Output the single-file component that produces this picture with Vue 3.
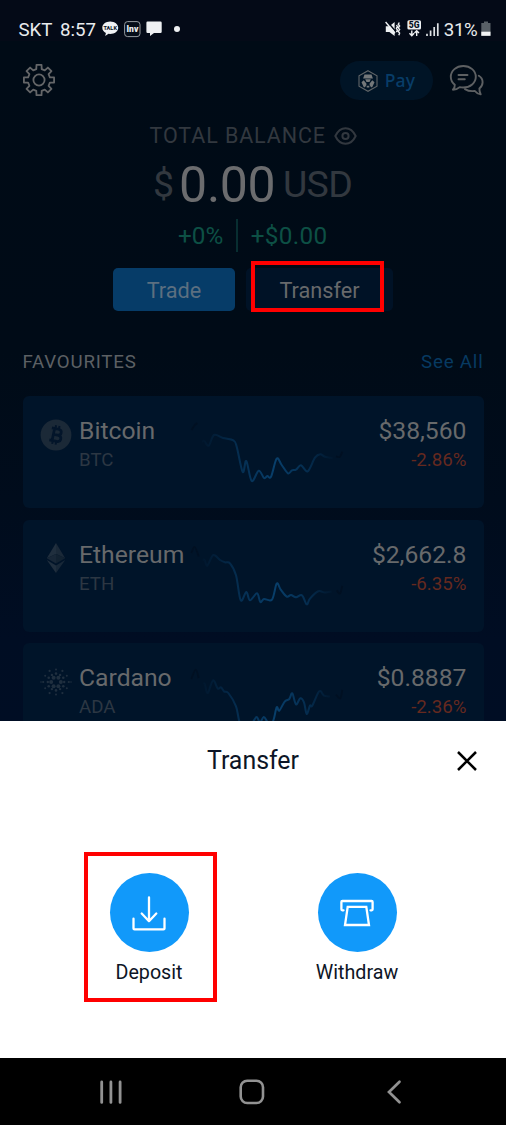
<script setup>
const smooth = (pts) => {
  let d = `M${pts[0][0]} ${pts[0][1]}`
  for (let i = 0; i < pts.length - 1; i++) {
    const a = pts[i - 1] || pts[i]
    const b = pts[i]
    const c = pts[i + 1]
    const e = pts[i + 2] || c
    d += `C${b[0] + (c[0] - a[0]) / 6} ${b[1] + (c[1] - a[1]) / 6} ${c[0] - (e[0] - b[0]) / 6} ${c[1] - (e[1] - b[1]) / 6} ${c[0]} ${c[1]}`
  }
  return d
}

// Sparkline points are relative to the top-left corner of each chart area.
const coins = [
  {
    id: 'btc', name: 'Bitcoin', code: 'BTC', price: '$38,560', change: '-2.86%',
    lead: [[1.7, 34], [4, 30], [7.3, 27]],
    tail: [[146, 60.3], [149.7, 61], [152.3, 55.7]],
    line: [[12, 45.7], [14.3, 45], [18.7, 49.7], [24, 39], [33, 42], [43.3, 44.3], [46.7, 50.7], [52.7, 76], [56.3, 65], [61.7, 85], [68.7, 74.7], [74, 82], [77.3, 80], [81, 80.7], [86.7, 62.7], [91.7, 69], [98, 77.3], [102, 74.3], [106, 73.7], [111, 69.3], [117.7, 75.3], [125, 61.7], [130.3, 58.3], [135, 60.7], [143, 62.3]]
  },
  {
    id: 'eth', name: 'Ethereum', code: 'ETH', price: '$2,662.8', change: '-6.35%',
    lead: [[1.3, 33], [4.7, 27], [8.7, 36.3]],
    tail: [[146.7, 70.3], [150, 73.6], [152.3, 66]],
    line: [[12.7, 39.6], [14.7, 40.3], [17.3, 45.6], [23.3, 35], [30, 40], [35, 42.3], [40, 43.3], [46, 55.3], [50.7, 80.3], [56.3, 72], [60, 80.3], [67, 73.3], [70.3, 82], [74, 79], [82, 79.6], [86.7, 63.6], [90.7, 69.6], [96.7, 76.6], [101, 75], [106, 77.3], [112, 75.3], [116.7, 84.3], [120, 78.6], [128.3, 71.3], [135, 72.6], [141.7, 71.6]]
  },
  {
    id: 'ada', name: 'Cardano', code: 'ADA', price: '$0.8887', change: '-2.36%',
    lead: [[1.3, 36], [5.7, 26.6], [8.7, 35]],
    tail: [[146, 51.6], [150.3, 55.3], [152.3, 47]],
    line: [[13.3, 40], [14.7, 41], [17.7, 50], [23, 37.3], [27.7, 45.6], [31, 44.3], [34.3, 48.6], [38.3, 50], [46, 63.3], [49.3, 78.3], [55, 92], [63, 79], [66.7, 74], [70, 79.3], [73.7, 74], [77, 78.3], [80, 82], [83.5, 77], [86.7, 64.3], [89.3, 67.6], [94.7, 58.6], [99.3, 56], [102.3, 50.3], [106, 61.3], [110.3, 55.3], [114, 59.3], [116.7, 71], [120, 62.6], [122.3, 62.6], [129.3, 48.3], [134, 52.6], [140, 53.6]]
  }
]

const ring = (n, r, size, offset = 0) =>
  Array.from({ length: n }, (_, i) => {
    const t = ((i + offset) * 2 * Math.PI) / n
    return { x: 16 + r * Math.cos(t), y: 16 + r * Math.sin(t), r: size }
  })
const adaDots = [
  ...ring(6, 4.8, 2),
  ...ring(6, 8.4, 1.3, 0.5),
  ...ring(6, 8.2, 1.2),
  ...ring(6, 12.5, 1, 0.5),
  ...ring(6, 12.8, 1.1),
  ...ring(2, 15, 0.8)
]

const teeth = 8
const gear = (() => {
  const p = []
  for (let i = 0; i < teeth; i++) {
    const c = (i * 360) / teeth - 90
    for (const [da, r] of [[-14, 11.2], [-9.5, 15.3], [9.5, 15.3], [14, 11.2]]) {
      const t = ((c + da) * Math.PI) / 180
      p.push(`${(17 + r * Math.cos(t)).toFixed(2)} ${(17 + r * Math.sin(t)).toFixed(2)}`)
    }
  }
  return `M${p.join('L')}Z`
})()
</script>

<template>
  <div class="phone">
    <div class="home">
      <div class="status">
        <span class="st">SKT</span>
        <span class="st clock">8:57</span>
        <svg class="talk" width="17" height="16" viewBox="0 0 17 16">
          <path d="M8.2.4C3.7.4.3 3.2.3 6.700c0 2.300 1.400 4.200 3.600 5.300L3.200 15l3.300-2.200 1.700.1c4.500 0 8-2.700 8-6.200S12.700.4 8.200.4Z" fill="#f0f2f4" />
          <text x="8.200" y="8.800" text-anchor="middle" class="talk-t">TALK</text>
        </svg>
        <svg class="inv" width="17" height="17" viewBox="0 0 17 17">
          <rect x=".6" y=".6" width="15.400" height="15" rx="3" fill="#050d19" stroke="#a6abb0" stroke-width=".9" />
          <text x="8.400" y="11.200" text-anchor="middle" class="inv-t">Inv</text>
        </svg>
        <svg class="msg" width="17" height="16" viewBox="0 0 17 16">
          <path d="M1.500.5h13q1.200 0 1.200 1.200v9q0 1.200-1.200 1.200H8L4 15v-3.100H1.500Q.4 11.900.4 10.700v-9Q.4.5 1.500.5Z" fill="#eef0f2" />
        </svg>
        <i class="more"></i>
        <svg class="mute" width="16" height="16" viewBox="0 0 16 16">
          <path d="M.8 5.300h3.700L9.600.9v14L4.400 10.900H.8Z" fill="#eef0f2" />
          <path d="M1.800.2 11 10.800" stroke="#040b18" stroke-width="1.500" />
          <path d="M.6 1 10 12.200" stroke="#eef0f2" stroke-width="1.400" />
          <path d="m11.500 4 .9 1.500-1 1.800 1 1.800-1 2M14.300 1.500l-1 1.700 1.300 1.800-1.300 1.800 1.300 1.800-1.300 1.800 1.300 1.800-.8 2" fill="none" stroke="#eef0f2" stroke-width="1.400" />
        </svg>
        <svg class="fiveg" width="15" height="17" viewBox="0 0 15 17">
          <rect x=".4" y=".3" width="13.600" height="9.200" rx="1.500" fill="#eef0f2" />
          <text x="7.200" y="8.100" text-anchor="middle" class="g-t">5G</text>
          <path d="M4.800 10.500v5M2.500 13.300l2.300 2.500 2.300-2.500M9.700 16v-5M7.500 13l2.200-2.300L12 13" fill="none" stroke="#eef0f2" stroke-width="1.400" />
        </svg>
        <svg class="bars" width="13" height="14" viewBox="0 0 13 14">
          <path d="M1 10.800v2.200M4.600 7.500V13M8.200 4V13M11.800.3V13" stroke="#dfe2e5" stroke-width="1.700" />
        </svg>
        <span class="st pct">31%</span>
        <svg class="batt" width="10" height="16" viewBox="0 0 10 16">
          <path d="M3 .5h4V2h2.500v12.800H.3V2H3Z" fill="#596067" />
          <path d="M.3 10.700h9.200v4.100H.3Z" fill="#f3f4f5" />
        </svg>
      </div>

      <div class="header">
        <svg width="34" height="34" viewBox="0 0 34 34" fill="none" stroke="#646668" stroke-width="1.800" stroke-linejoin="round">
          <path :d="gear" />
          <circle cx="17" cy="17" r="5.600" />
        </svg>
        <div class="pay">
          <svg width="20" height="22" viewBox="0 0 20 22">
            <path d="M10 .7 19 5.800v10.400l-9 5.100-9-5.100V5.800Z" fill="none" stroke="#606568" stroke-width="1.100" />
            <path d="M6.500 4.400h7l1.400 4.100H5.100ZM7.200 9.300h5.600l-1.300 2.700h-3ZM3.500 12.300l2.200-2 2.700 3.200v1.600L7 17.300H5.800ZM16.500 12.300l-2.200-2-2.700 3.200v1.600l1.400 2.200h1.200ZM8.700 15.700h2.600v1.900H8.700Z" fill="#74787a" />
          </svg>
          <span>Pay</span>
        </div>
        <svg class="chat" width="36" height="34" viewBox="0 0 36 34" fill="none" stroke="#5d6062" stroke-width="1.900" stroke-linecap="round" stroke-linejoin="round">
          <path d="M14.300 2C7.300 2 1.800 6.700 1.800 12.800c0 3.200 1.500 6 4 7.900.2 2-.6 3.700-1.900 5 2.700 0 5-.9 6.800-2.600 1.100.3 2.300.4 3.600.4 7 0 12.500-4.600 12.500-10.700S21.300 2 14.300 2Z" />
          <path d="M9.500 11H18.500M9.500 15.200h6.300M29.800 11.800c2.600 1.500 3.800 3.800 3.800 6.500 0 2.500-1.200 4.600-3.200 6.200-.1 2.100.3 3.800 1.300 5.900-2.600-.4-4.400-1.500-5.800-3.400-4.200.5-7.600-.4-9.900-1.900" />
        </svg>
      </div>

      <div class="total">
        <span>TOTAL BALANCE</span>
        <svg width="23" height="20" viewBox="0 0 23 20" fill="none" stroke="#32383f" stroke-width="2">
          <path d="M1.300 10C3.800 4.800 7.200 2.200 11.500 2.200S19.200 4.800 21.700 10C19.200 15.200 15.800 17.800 11.500 17.800S3.800 15.200 1.300 10Z" stroke-linejoin="round" />
          <circle cx="11.500" cy="10" r="3.100" />
        </svg>
      </div>
      <div class="amount">
        <span class="unit">$</span><span class="num">0.00</span><span class="unit usd">USD</span>
      </div>
      <div class="delta">
        <span class="d1">+0%</span><i></i><span class="d2">+$0.00</span>
      </div>
      <div class="actions">
        <div class="btn trade">Trade</div>
        <div class="btn transfer">Transfer<b class="mark"></b></div>
      </div>

      <div class="fav">
        <span>FAVOURITES</span>
        <span class="all">See All</span>
      </div>

      <div class="cards">
        <div v-for="c in coins" :key="c.id" class="card">
          <div class="logo">
            <svg v-if="c.id === 'btc'" width="32" height="32" viewBox="0 0 32 32">
              <circle cx="16" cy="16" r="15.400" fill="#1b2937" />
              <g transform="rotate(12 16 16)" fill="none" stroke="#03152a" stroke-width="2.700">
                <path d="M10.500 9.900h6.800c4.400 0 4.400 5.900 0 5.900h-4.200 4.800c4.800 0 4.800 6.300 0 6.300h-7.400M13.300 9.900v12" />
                <path d="M14.100 6.500v3M17.600 6.500v3M14.100 22.500v3M17.600 22.500v3" stroke-width="2" />
              </g>
            </svg>
            <svg v-else-if="c.id === 'eth'" width="32" height="32" viewBox="0 0 32 32">
              <path d="M16 1 6.800 16.200 16 12.100Z" fill="#202f3e" />
              <path d="M16 1l9.200 15.200L16 12.100Z" fill="#1a2938" />
              <path d="M6.800 16.200 16 12.100v9.500Z" fill="#182737" />
              <path d="M25.200 16.200 16 12.100v9.500Z" fill="#122231" />
              <path d="M6.800 18 16 23.400V31Z" fill="#202f3e" />
              <path d="M25.200 18 16 23.400V31Z" fill="#182838" />
            </svg>
            <svg v-else width="32" height="32" viewBox="0 0 32 32" fill="#1f2f3f">
              <circle v-for="(d, i) in adaDots" :key="i" :cx="d.x" :cy="d.y" :r="d.r" />
            </svg>
          </div>
          <div class="names">
            <div class="name">{{ c.name }}</div>
            <div class="code">{{ c.code }}</div>
          </div>
          <svg class="chart" width="156" height="112" viewBox="0 0 156 112" fill="none">
            <defs>
              <linearGradient :id="'g-' + c.id" gradientUnits="userSpaceOnUse" x1="12" y1="0" x2="145" y2="0">
                <stop offset="0" stop-color="#083f6b" stop-opacity="0.05" />
                <stop offset=".25" stop-color="#083f6b" stop-opacity=".55" />
                <stop offset=".55" stop-color="#083f6b" />
                <stop offset=".8" stop-color="#083f6b" stop-opacity=".55" />
                <stop offset="1" stop-color="#083f6b" stop-opacity="0" />
              </linearGradient>
            </defs>
            <path :d="smooth(c.line)" :stroke="'url(#g-' + c.id + ')'" stroke-width="2" />
            <path :d="smooth(c.lead)" stroke="#001022" stroke-width="1.800" />
            <path :d="smooth(c.tail)" stroke="#001022" stroke-width="1.800" />
          </svg>
          <div class="values">
            <div class="name">{{ c.price }}</div>
            <div class="code red">{{ c.change }}</div>
          </div>
        </div>
      </div>
    </div>

    <div class="sheet">
      <div class="sheet-head">
        <span>Transfer</span>
        <svg class="close" width="22" height="22" viewBox="0 0 22 22">
          <path d="m2 2 18 18M20 2 2 20" stroke="#000" stroke-width="2.500" />
        </svg>
      </div>
      <div class="options">
        <div class="option">
          <div class="disc">
            <svg width="40" height="40" viewBox="0 0 40 40" fill="none" stroke="#fff" stroke-width="2.300" stroke-linecap="round" stroke-linejoin="round">
              <path d="M20 4.500v23.700M12.700 20.500l7.300 7.700 7.300-7.700M4.500 25.700v9.700q0 1 1 1h29q1 0 1-1V25.700" />
            </svg>
          </div>
          <span>Deposit</span>
          <b class="mark"></b>
        </div>
        <div class="option">
          <div class="disc">
            <svg width="40" height="40" viewBox="0 0 40 40" fill="none" stroke="#fff" stroke-width="2.300" stroke-linecap="round" stroke-linejoin="round">
              <path d="M6.500 17.300H5.200q-.8 0-.8-1V9q0-1 1-1h29.200q1 0 1 1v7.300q0 1-.8 1h-1.300" />
              <path d="M10.700 13.800h18.600L32 32H8Z" stroke-linejoin="miter" />
            </svg>
          </div>
          <span>Withdraw</span>
        </div>
      </div>
    </div>

    <div class="nav">
      <svg width="24" height="26" viewBox="0 0 24 26"><path d="M2.700 2.900v20.500M11.900 2.900v20.500M21.100 2.900v20.500" stroke="#929292" stroke-width="2.800" stroke-linecap="round" /></svg>
      <svg class="home-key" width="26" height="26" viewBox="0 0 26 26"><rect x="1.700" y="1.700" width="22.300" height="22.300" rx="6.500" fill="none" stroke="#929292" stroke-width="2.600" /></svg>
      <svg width="16" height="26" viewBox="0 0 16 26"><path d="M13.500 2.800 3 13l10.500 10.200" fill="none" stroke="#929292" stroke-width="2.700" stroke-linecap="round" /></svg>
    </div>
  </div>
</template>

<style>
body {
  margin: 0;
  background: #000;
}
</style>

<style scoped>
.phone {
  width: 506px;
  height: 1125px;
  overflow: hidden;
  font-family: Roboto, "Liberation Sans", sans-serif;
  display: flex;
  flex-direction: column;
}
svg {
  display: block;
  flex: none;
}
.home {
  height: 721px;
  flex: none;
  overflow: hidden;
  background: linear-gradient(#040a17 0 41px, #000b16 41px, #000b17 350px, #000c1c 500px, #000d23 640px, #000d24);
}
.status {
  height: 58px;
  display: flex;
  align-items: center;
  padding: 1px 15px 0 18.500px;
  box-sizing: border-box;
  color: #e9ebed;
}
.st {
  font-size: 18.700px;
  line-height: 24px;
}
.clock { margin-left: 7.500px; }
.talk { margin-left: 6px; margin-top: -1px; }
.inv { margin-left: 4.500px; margin-top: -1px; }
.msg { margin-left: 5px; margin-top: -2px; }
.more {
  width: 6px;
  height: 6px;
  border-radius: 50%;
  background: #eef0f2;
  margin-left: 11.500px;
  margin-top: -2px;
}
.talk-t { font: 700 5.600px Roboto, sans-serif; fill: #07101c; }
.inv-t { font: 900 8.500px Roboto, sans-serif; fill: #eef0f2; }
.g-t { font: 900 8.500px Roboto, sans-serif; fill: #07101c; }
.mute { margin-left: auto; margin-top: -2px; }
.fiveg { margin-left: 6px; margin-top: -2px; }
.bars { margin-left: 4px; }
.pct { margin-left: 5px; margin-right: 1px; letter-spacing: -.3px; }
.batt { margin-left: 2.500px; margin-top: -1px; }

.header {
  height: 44px;
  display: flex;
  align-items: center;
  padding: 0 21px 0 21.500px;
}
.pay {
  margin-left: auto;
  width: 93px;
  height: 39px;
  border-radius: 20px;
  background: #001426;
  display: flex;
  align-items: center;
  justify-content: center;
  gap: 7px;
  margin-top: 1px;
}
.pay span {
  font: 500 17.500px/24px "Noto Sans", sans-serif;
  color: #083d68;
  letter-spacing: .2px;
  margin-top: -2px;
}
.chat { margin-left: 16px; margin-top: 2px; }

.total {
  margin-top: 20px;
  height: 28px;
  display: flex;
  align-items: center;
  padding-left: 149.500px;
  font-size: 21.500px;
  line-height: 28px;
  letter-spacing: .900px;
  color: #32383f;
}
.total svg { margin-left: 8px; margin-top: -1px; }
.amount {
  height: 60px;
  margin-top: 4px;
  display: flex;
  padding-left: 153px;
  white-space: nowrap;
}
.unit {
  font-size: 37.500px;
  line-height: 60px;
  color: #32383f;
}
.num {
  font-size: 50px;
  line-height: 62px;
  color: #6b6c6e;
  margin-left: 5px;
  letter-spacing: -.3px;
}
.usd { margin-left: 7.500px; letter-spacing: -.6px; }
.delta {
  display: flex;
  align-items: center;
  height: 34px;
  margin-top: 4px;
  padding-left: 178px;
  font-size: 24.300px;
  line-height: 34px;
  color: #0d5045;
}
.delta span { padding-top: 1px; }
.d2 { letter-spacing: .3px; }
.delta i {
  width: 2px;
  height: 33px;
  background: #082e31;
  margin: 0 13px 0 12.500px;
}
.actions {
  margin-top: 16px;
  display: flex;
  gap: 11px;
  padding-left: 113px;
}
.btn {
  height: 43px;
  line-height: 45px;
  border-radius: 5px;
  text-align: center;
  font-size: 21.700px;
  color: #67696b;
}
.trade { width: 122px; background: #063c68; color: #5c6f80; }
.transfer { width: 147px; background: #001226; position: relative; }
.mark {
  position: absolute;
  border: 4px solid #f00;
  box-sizing: border-box;
}
.transfer .mark {
  left: 5px;
  top: -7px;
  width: 133px;
  height: 51px;
}
.fav {
  margin-top: 39px;
  height: 24px;
  line-height: 24px;
  display: flex;
  justify-content: space-between;
  padding: 0 22.500px 0 22.500px;
  font-size: 18.700px;
  letter-spacing: .8px;
  color: #5c6064;
}
.all { color: #073a62; }
.cards {
  margin-top: 22px;
  padding: 0 22.500px;
  display: flex;
  flex-direction: column;
  gap: 11.700px;
}
.card {
  height: 112px;
  border-radius: 6px;
  background: #001429;
  display: flex;
  flex: none;
}
.logo { padding: 22.500px 0 0 17.500px; }
.names { width: 118px; padding: 19px 0 0 7px; }
.name {
  font-size: 24.700px;
  line-height: 31px;
  color: #67696b;
}
.code {
  font-size: 18.700px;
  line-height: 28px;
  color: #2c3743;
}
.chart { margin-left: -7px; }
.values { flex: 1; text-align: right; padding: 19px 17px 0 0; }
.red { color: #65291f; }

.sheet {
  height: 336.500px;
  flex: none;
  background: #fff;
  color: #0d1526;
}
.sheet-head {
  height: 80px;
  position: relative;
  display: flex;
  justify-content: center;
  font-size: 24.900px;
  line-height: 79px;
}
.close { position: absolute; left: 455.500px; top: 29px; }
.options {
  display: flex;
  justify-content: space-between;
  padding: 51px 84px 0 84px;
}
.option {
  position: relative;
  width: 130px;
  height: 150px;
  padding-top: 21px;
  box-sizing: border-box;
  display: flex;
  flex-direction: column;
  align-items: center;
  font-size: 19.700px;
  line-height: 24px;
}
.option span { margin-top: 9px; }
.disc {
  width: 79px;
  height: 79px;
  border-radius: 50%;
  background: #1199fa;
  display: flex;
  align-items: center;
  justify-content: center;
}
.option .mark { left: 0; top: 0; width: 133px; height: 150px; }
.nav {
  flex: 1;
  background: #000;
  display: flex;
  align-items: center;
  justify-content: space-between;
  padding: 1px 104px 0 98.500px;
}
.home-key { margin-right: 4px; }
</style>
